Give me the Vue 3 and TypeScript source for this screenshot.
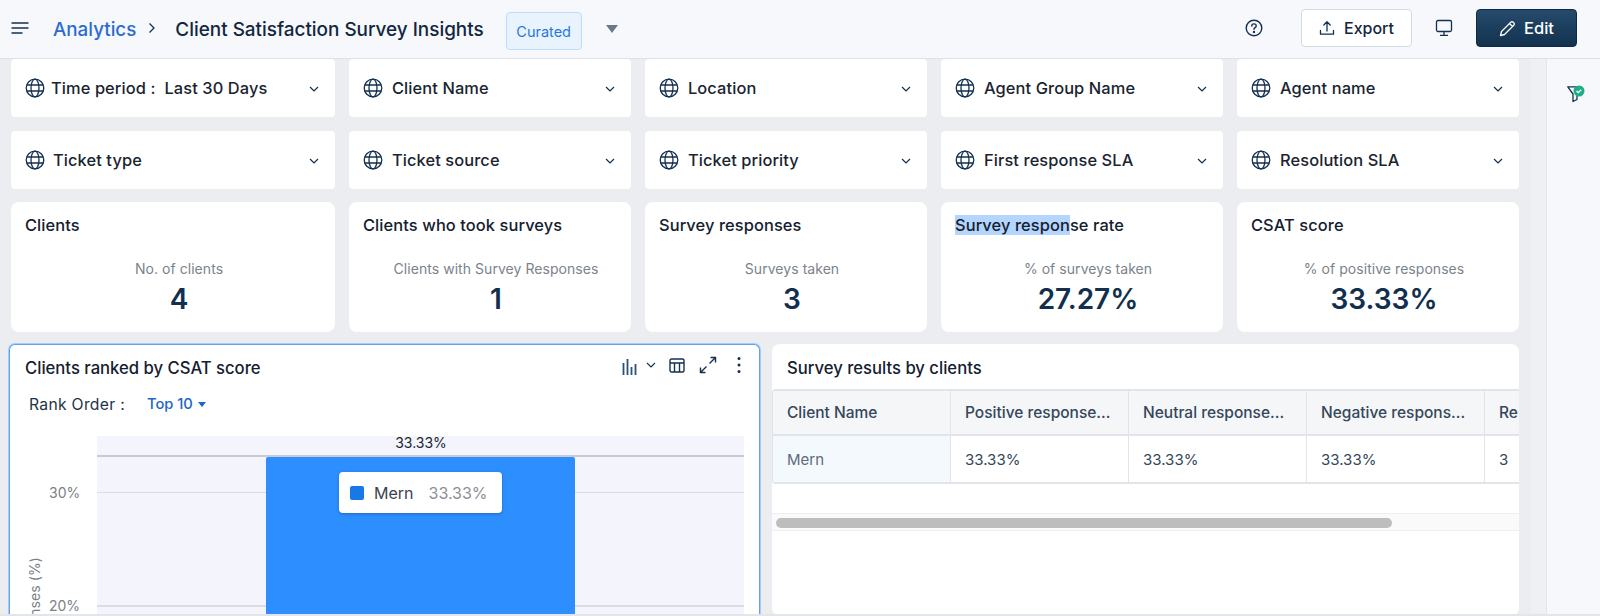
<script setup lang="ts">
const row1: string[] = ['Client Name', 'Location', 'Agent Group Name', 'Agent name']
const row2: string[] = ['Ticket type', 'Ticket source', 'Ticket priority', 'First response SLA', 'Resolution SLA']
const stats = [
  { title: 'Clients', label: 'No. of clients', value: '4' },
  { title: 'Clients who took surveys', label: 'Clients with Survey Responses', value: '1' },
  { title: 'Survey responses', label: 'Surveys taken', value: '3' },
  { title: 'Survey response rate', label: '% of surveys taken', value: '27.27%', selected: 'Survey respon' },
  { title: 'CSAT score', label: '% of positive responses', value: '33.33%' },
]
const headers = ['Client Name', 'Positive response...', 'Neutral response...', 'Negative respons...', 'Re']
const cells = ['Mern', '33.33%', '33.33%', '33.33%', '3']
</script>

<template>
  <div class="shell">
    <header class="top">
      <svg class="menu" width="18" height="14" viewBox="0 0 18 14" fill="none" stroke="#14304f" stroke-width="1.4" stroke-linecap="round"><path d="M1 2h16M1 7h16M1 12h10"/></svg>
      <span class="crumb">Analytics</span>
      <svg class="sep" width="8" height="12" viewBox="0 0 8 12" fill="none" stroke="#14304f" stroke-width="1.3"><path d="M1.5 1.5 6 6l-4.500 4.500"/></svg>
      <span class="page">Client Satisfaction Survey Insights</span>
      <span class="tag">Curated</span>
      <span class="caret"></span>
      <span class="grow"></span>
      <svg class="help" width="18" height="18" viewBox="0 0 18 18" fill="none" stroke="#14304f" stroke-width="1.4"><circle cx="9" cy="9" r="7.800"/><path d="M6.800 7c0-1.300 1-2.100 2.200-2.100s2.200.8 2.200 2c0 1.800-2.200 1.700-2.200 3.400" stroke-linecap="round"/><circle cx="9" cy="13" r=".5" fill="#14304f"/></svg>
      <button class="export">
        <svg width="16" height="16" viewBox="0 0 16 16" fill="none" stroke="#14304f" stroke-width="1.300" stroke-linecap="round" stroke-linejoin="round"><path d="M8 11V2M4.800 5 8 1.800 11.200 5M1.500 10.500v3.700h13v-3.700"/></svg>
        Export
      </button>
      <svg class="screen" width="18" height="18" viewBox="0 0 18 18" fill="none" stroke="#14304f" stroke-width="1.300"><rect x="1.500" y="1.500" width="15" height="11" rx="1.500"/><path d="M9 12.500v3.500M5 16.300h8"/></svg>
      <button class="edit">
        <svg width="17" height="17" viewBox="0 0 17 17" fill="none" stroke="#fff" stroke-width="1.300" stroke-linejoin="round"><path d="M1.500 15.500 2.500 11.500 11.800 2.200a1.700 1.700 0 0 1 2.400 0l.6.6a1.700 1.700 0 0 1 0 2.400L5.500 14.500zM10.500 3.500l3 3"/></svg>
        Edit
      </button>
    </header>

    <div class="body">
      <main class="main">
        <div class="grid">
          <div class="filter">
            <svg class="globe" width="20" height="20" viewBox="0 0 20 20" fill="none" stroke="#14304f" stroke-width="1.300"><circle cx="10" cy="10" r="8.800"/><ellipse cx="10" cy="10" rx="4" ry="8.800"/><path d="M1.800 7h16.400M1.800 13h16.400"/></svg>
            <span class="ftext first">Time period :&nbsp; Last 30 Days</span>
            <svg class="chev" width="10" height="6" viewBox="0 0 10 6" fill="none" stroke="#14304f" stroke-width="1.200"><path d="m1 1 4 4 4-4"/></svg>
          </div>
          <div v-for="f in row1" :key="f" class="filter">
            <svg class="globe" width="20" height="20" viewBox="0 0 20 20" fill="none" stroke="#14304f" stroke-width="1.300"><circle cx="10" cy="10" r="8.800"/><ellipse cx="10" cy="10" rx="4" ry="8.800"/><path d="M1.800 7h16.400M1.800 13h16.400"/></svg>
            <span class="ftext">{{ f }}</span>
            <svg class="chev" width="10" height="6" viewBox="0 0 10 6" fill="none" stroke="#14304f" stroke-width="1.200"><path d="m1 1 4 4 4-4"/></svg>
          </div>
          <div v-for="f in row2" :key="f" class="filter">
            <svg class="globe" width="20" height="20" viewBox="0 0 20 20" fill="none" stroke="#14304f" stroke-width="1.300"><circle cx="10" cy="10" r="8.800"/><ellipse cx="10" cy="10" rx="4" ry="8.800"/><path d="M1.800 7h16.400M1.800 13h16.400"/></svg>
            <span class="ftext">{{ f }}</span>
            <svg class="chev" width="10" height="6" viewBox="0 0 10 6" fill="none" stroke="#14304f" stroke-width="1.200"><path d="m1 1 4 4 4-4"/></svg>
          </div>
          <div v-for="s in stats" :key="s.title" class="stat">
            <div class="stitle">
              <template v-if="s.selected"><span class="sel">{{ s.selected }}</span>{{ s.title.slice(s.selected.length) }}</template>
              <template v-else>{{ s.title }}</template>
            </div>
            <div class="slabel">{{ s.label }}</div>
            <div class="svalue">{{ s.value }}</div>
          </div>
        </div>

        <div class="charts">
          <section class="panel chart">
            <div class="phead">
              <span class="ptitle">Clients ranked by CSAT score</span>
              <div class="tools">
                <svg width="17" height="18" viewBox="0 0 17 18" fill="none" stroke="#2a5275" stroke-width="1.800"><path d="M1.500 5v12M5.500 1v16M9.500 9v8M13.500 6v11" /></svg>
                <svg class="tchev" width="10" height="6" viewBox="0 0 10 6" fill="none" stroke="#14304f" stroke-width="1.100"><path d="m1 1 4 4 4-4"/></svg>
                <svg class="ttable" width="16" height="15" viewBox="0 0 16 15" fill="none" stroke="#14304f" stroke-width="1.400"><rect x="1" y="1" width="14" height="13" rx="1.500"/><path d="M1 5h14M5.500 5v9M10.500 5v9"/></svg>
                <svg class="texpand" width="18" height="18" viewBox="0 0 18 18" fill="none" stroke="#14304f" stroke-width="1.400"><path d="M10.500 7.500 16.500 1.500M11.500 1.500h5v5M7.500 10.500l-6 6M1.500 11.500v5h5"/></svg>
                <svg class="tmore" width="4" height="18" viewBox="0 0 4 18" fill="#14304f"><circle cx="2" cy="2.500" r="1.500"/><circle cx="2" cy="9" r="1.500"/><circle cx="2" cy="15.500" r="1.500"/></svg>
              </div>
            </div>
            <div class="rank">
              <span class="rlabel">Rank Order :</span>
              <span class="rval">Top 10</span>
              <span class="rcaret"></span>
            </div>
            <div class="plot">
              <span class="gl g0"></span>
              <span class="gl g1"></span>
              <span class="gl g2"></span>
              <span class="tick t1">30%</span>
              <span class="tick t2">20%</span>
              <span class="axis">Responses (%)</span>
              <span class="barlabel">33.33%</span>
              <div class="bar"></div>
              <div class="tip"><i class="swatch"></i><span class="tname">Mern</span><span class="tval">33.33%</span></div>
            </div>
          </section>

          <section class="panel results">
            <div class="phead rhead"><span class="ptitle">Survey results by clients</span></div>
            <div class="table">
              <div class="tr thead">
                <div v-for="h in headers" :key="h" class="td">{{ h }}</div>
              </div>
              <div class="tr tbody">
                <div v-for="(c, i) in cells" :key="i" class="td">{{ c }}</div>
              </div>
            </div>
            <div class="hscroll"><div class="thumb"></div></div>
          </section>
        </div>
      </main>
      <div class="track"></div>
      <aside class="side">
        <svg width="18" height="18" viewBox="0 0 18 18" fill="none">
          <path d="M.8 1.800h9.500L10 9v5.500l-4 2V9z" stroke="#14304f" stroke-width="1.300" stroke-linejoin="round"/>
          <circle cx="12" cy="6" r="5.500" fill="#1fae84"/>
          <path d="m9.600 6 1.700 1.700 2.900-2.900" stroke="#fff" stroke-width="1.300"/>
        </svg>
      </aside>
    </div>
    <div class="foot"></div>
  </div>
</template>

<style>
html, body { margin: 0; background: #ebedf0; }
</style>

<style scoped>
* { box-sizing: border-box; }
.shell {
  width: 1600px; height: 616px; display: flex; flex-direction: column; overflow: hidden;
  background: #ebedf0; font-family: Inter, "Noto Sans", sans-serif; color: #14202e;
}
.top {
  height: 59px; flex: none; display: flex; align-items: center; background: #f6f8fb;
  border-bottom: 1px solid #dde2e9; padding-left: 11px; color: #12263f;
}
.menu { margin-right: 24px; margin-top: -2px; }
.crumb { font-size: 18.800px; font-weight: 500; color: #2d6bd0; }
.sep { margin: -2px 19px 0 12px; }
.page { font-size: 18.900px; font-weight: 500; color: #12263f; }
.tag {
  margin-left: 22px; width: 76px; height: 38px; border: 1px solid #bcdcfb; border-radius: 4px;
  background: #e9f3fe; color: #2a78dd; font-size: 14.500px; display: flex; align-items: center; justify-content: center;
  margin-top: 4px;
}
.caret { margin: -1px 0 0 24px; border: 6px solid transparent; border-top: 8px solid #69798c; border-bottom: 0; }
.grow { flex: 1; }
.help { margin-right: 38px; margin-top: -2px; }
.export {
  width: 111px; height: 38px; background: #fff; border: 1px solid #d3dbe4; border-radius: 4px; margin-top: -2px;
  font: 500 16px Inter, sans-serif; color: #12263f; display: flex; align-items: center; justify-content: center; gap: 9px; padding: 0;
}
.screen { margin: -2px 0 0 23px; }
.edit {
  margin: -2px 23px 0 23px; width: 101px; height: 38px; border: 1px solid #0e2a45; border-radius: 4px;
  background: linear-gradient(#264b6c, #12324f); color: #fff; font: 500 16.500px Inter, sans-serif;
  display: flex; align-items: center; justify-content: center; gap: 8px; padding: 0;
}
.body { flex: 1; min-height: 0; display: flex; }
.main { width: 1531px; flex: none; padding: 0 11px 0 11px; overflow: hidden; }
.track { width: 15px; flex: none; background: #eef0f2; }
.side { flex: 1; background: #f6f8fb; border-left: 1px solid #e2e5e9; display: flex; justify-content: center; padding-top: 26px; }
.side svg { margin-left: 4px; }
.grid {
  display: grid; grid-template-columns: 324px 282px 282px 282px 282px; column-gap: 14px;
  grid-template-rows: 58px 58px 130px; row-gap: 14px; width: 1509px;
}
.filter {
  background: #fff; border-radius: 4px; display: flex; align-items: center; padding: 0 16px 0 14px;
}
.globe { flex: none; margin-top: -1px; }
.ftext { margin-left: 9px; font-size: 16.400px; font-weight: 500; flex: 1; white-space: nowrap; color: #1a2430; letter-spacing: .1px; }
.first { margin-left: 6px; }
.filter:nth-child(6) .ftext { margin-left: 8px; }
.chev { flex: none; margin-top: 1px; }
.stat { background: #fff; border-radius: 8px; padding: 13px 14px 0; margin: -1px 0 1px; position: relative; }
.stitle { font-size: 16.400px; font-weight: 500; line-height: 20px; color: #14202e; white-space: nowrap; letter-spacing: .1px; }
.sel { background: #b4d5fe; display: inline-block; height: 20px; }
.slabel { margin-top: 24px; padding-left: 12px; text-align: center; font-size: 14px; letter-spacing: .05px; line-height: 20px; color: #7b838c; white-space: nowrap; }
.svalue { margin-top: 3px; padding-left: 12px; text-align: center; font-size: 28px; line-height: 34px; font-weight: 600; color: #12304d; }
.charts { display: grid; grid-template-columns: 751px 747px; column-gap: 12px; margin-top: 11px; margin-left: -2px; }
.panel { background: #fff; border-radius: 8px; height: 272px; position: relative; overflow: hidden; }
.chart { border: 1px solid #5ba3f5; border-bottom: 0; border-radius: 6px 6px 0 0; box-shadow: 0 0 0 1px rgba(91,163,245,.45); }
.phead { display: flex; align-items: center; justify-content: space-between; padding: 10px 14px 0 15px; height: 36px; }
.ptitle { font-size: 16.650px; font-weight: 500; color: #14202e; white-space: nowrap; }
.tools { display: flex; align-items: center; margin-top: -3px; }
.tchev { margin: -4px 0 0 7px; }
.ttable { margin: -3px 0 0 13px; }
.texpand { margin: -3px 0 0 14px; }
.tmore { margin: -4px 4px 0 20px; }
.rank { display: flex; align-items: center; height: 24px; margin-top: 11px; padding-left: 19px; }
.rlabel { font-size: 15.700px; color: #223448; letter-spacing: .3px; }
.rval { font-size: 14.700px; font-weight: 500; color: #1a66c9; margin-left: 22px; }
.rcaret { margin-left: 5px; border: 4px solid transparent; border-top: 5px solid #1a66c9; border-bottom: 0; }
.plot { position: absolute; left: 0; top: 0; width: 100%; height: 100%; pointer-events: none; }
.plot::before { content: ""; position: absolute; left: 87px; top: 91px; width: 647px; height: 190px; background: #f3f4fc; }
.gl { position: absolute; left: 87px; width: 647px; height: 1px; background: #d9dce6; }
.g0 { top: 110px; background: #c9cbd0; height: 2px; }
.g1 { top: 147px; }
.g2 { top: 260px; height: 2px; }
.tick { position: absolute; left: 39px; font-size: 14px; color: #7c8087; line-height: 18px; }
.t1 { top: 139px; }
.t2 { top: 252px; }
.axis { position: absolute; left: 17px; top: 212px; font-size: 14px; color: #7c8087; writing-mode: vertical-rl; transform: rotate(180deg); white-space: nowrap; line-height: 16px; letter-spacing: .1px; }
.barlabel { position: absolute; left: 256px; width: 310px; top: 88px; text-align: center; font-size: 14px; line-height: 20px; color: #20242b; }
.bar { position: absolute; left: 256px; top: 112px; width: 309px; height: 170px; background: #2d8eff; border-radius: 2px 2px 0 0; }
.tip {
  position: absolute; left: 329px; top: 127px; width: 163px; height: 41px; background: #fff; border-radius: 4px;
  box-shadow: 0 1px 3px rgba(0,0,0,.25); display: flex; align-items: center; padding-left: 11px;
}
.swatch { width: 14px; height: 14px; border-radius: 2px; background: #1878e8; }
.tname { margin-left: 10px; font-size: 16px; color: #3a4450; }
.tval { margin-left: 15px; font-size: 16px; color: #8a8f96; }
.rhead { padding-left: 15px; height: 45px; padding-top: 3px; }
.table { border: 1px solid #e1e4e8; border-radius: 4px 0 0 4px; height: 95px; overflow: hidden; border-width: 2px 0 2px 1px; }
.tr { display: grid; grid-template-columns: 178px 178px 178px 178px 60px; white-space: nowrap; }
.thead { height: 45px; background: #f4f6f8; border-bottom: 2px solid #e1e4e8; font-weight: 500; font-size: 15.500px; color: #34475b; }
.tbody { height: 46px; font-size: 15px; color: #34475b; }
.td { display: flex; align-items: center; padding-left: 14px; border-right: 1px solid #e1e4e8; overflow: hidden; }
.td:last-child { border-right: 0; }
.tbody .td:first-child { background: #f4f9fe; color: #5d6b7a; }
.hscroll { height: 18px; margin-top: 29px; background: #fafafa; border: 1px solid #efefef; border-width: 1px 0; padding: 4px 0 0 4px; }
.thumb { width: 616px; height: 10px; border-radius: 5px; background: #bdbdbd; }
.foot { height: 2px; flex: none; background: #e3e5e8; }
</style>
